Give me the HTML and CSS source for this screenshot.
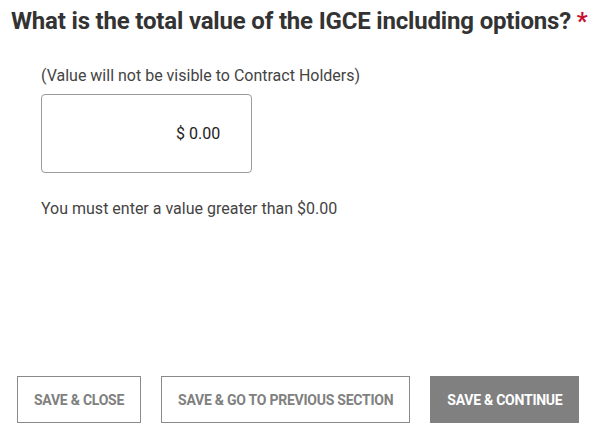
FILE: index.html
```html
<!DOCTYPE html>
<html>
<head>
<meta charset="utf-8">
<link rel="stylesheet" href="styles.css">
</head>
<body>
<div class="page">
  <h1 class="question">What is the total value of the IGCE including options? <span class="req">*</span></h1>
  <div class="field">
    <p class="hint">(Value will not be visible to Contract Holders)</p>
    <div class="input">$ 0.00</div>
    <p class="error">You must enter a value greater than $0.00</p>
  </div>
  <div class="actions">
    <button class="btn">SAVE &amp; CLOSE</button>
    <button class="btn">SAVE &amp; GO TO PREVIOUS SECTION</button>
    <button class="btn primary">SAVE &amp; CONTINUE</button>
  </div>
</div>
</body>
</html>
```
FILE: styles.css
```css
html, body {
  margin: 0;
  padding: 0;
  background: #fff;
}
body {
  font-family: Roboto, "Liberation Sans", sans-serif;
  color: #3a3a3a;
}
.page {
  width: 604px;
  height: 436px;
  box-sizing: border-box;
  padding: 7px 0 0 11px;
  display: flex;
  flex-direction: column;
}
.question {
  margin: 0;
  font-size: 24px;
  font-weight: 700;
  line-height: 28px;
  letter-spacing: -0.18px;
  color: #333;
}
.req {
  color: #c8102e;
}
.field {
  padding-left: 30px;
  margin-top: 31px;
}
.hint {
  margin: 0;
  font-size: 16px;
  line-height: 20px;
  color: #444;
}
.input {
  margin-top: 8px;
  width: 211px;
  height: 79px;
  box-sizing: border-box;
  border: 1px solid #9a9a9a;
  border-radius: 4px;
  display: flex;
  align-items: center;
  padding-left: 134px;
  font-size: 16px;
  color: #222;
}
.error {
  margin: 26px 0 0;
  font-size: 16px;
  line-height: 20px;
  color: #444;
}
.actions {
  margin-top: auto;
  margin-bottom: 13px;
  padding-left: 6px;
  display: flex;
  gap: 20px;
}
.btn {
  height: 47px;
  box-sizing: border-box;
  border: 1px solid #8a8a8a;
  background: #fff;
  color: #808080;
  font-family: Roboto, "Liberation Sans", sans-serif;
  font-size: 14px;
  font-weight: 700;
  letter-spacing: -0.25px;
  padding: 0 16px;
  border-radius: 0;
}
.btn.primary {
  background: #808080;
  border-color: #808080;
  color: #fff;
}
```
